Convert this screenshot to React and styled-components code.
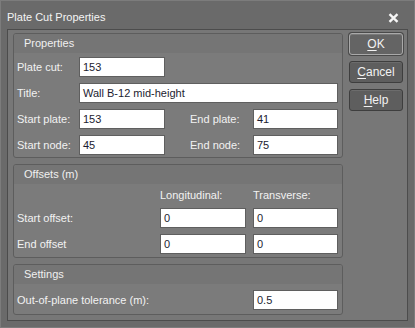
import React from "react";
import styled, { createGlobalStyle } from "styled-components";

const GlobalStyle = createGlobalStyle`
  html, body {
    margin: 0;
    padding: 0;
    background: #6a6a6a;
  }
  body {
    font-family: "Liberation Sans", Arial, sans-serif;
    font-size: 11px;
    color: #f2f2f2;
  }
`;

// Outer dialog frame
const Window = styled.div`
  box-sizing: border-box;
  width: 415px;
  height: 328px;
  background: #6a6a6a;
  border: 1px solid #7c7c7c;
  padding: 0 6px 6px 6px;
  display: flex;
  flex-direction: column;
`;

const TitleBar = styled.div`
  height: 28px;
  flex: none;
  display: flex;
  align-items: flex-start;
  justify-content: space-between;
  padding: 10px 9px 0 0;
  box-sizing: border-box;
  line-height: 13px;
  color: #f4f4f4;
`;

const CloseButton = styled.div`
  width: 11px;
  height: 10px;
  margin-top: 2px;
  display: flex;
`;

const Client = styled.div`
  flex: 1;
  border: 1px solid #4c4c4c;
  background: #777777;
  display: flex;
  gap: 6px;
  padding: 3px 0 0 5px;
`;

const Groups = styled.div`
  width: 330px;
  display: flex;
  flex-direction: column;
  gap: 6px;
`;

const Group = styled.div`
  box-sizing: border-box;
  height: ${(p) => p.h}px;
  border: 1px solid #5d5d5d;
  border-radius: 3px;
  background: #7b7b7b;
  overflow: hidden;
`;

const GroupHeader = styled.div`
  height: 19px;
  line-height: 19px;
  padding-left: 10px;
  background: #757575;
  color: #f0f0f0;
`;

const FieldGrid = styled.div`
  display: grid;
  grid-template-columns: ${(p) => p.cols};
  row-gap: ${(p) => p.rowGap ?? 6}px;
  align-items: center;
  padding: ${(p) => p.pad} 4px 0 3px;
`;

const Label = styled.div`
  line-height: 20px;
  white-space: nowrap;
  grid-column: ${(p) => p.col || "auto"};
`;

const ColHead = styled.div`
  line-height: 14px;
  grid-column: ${(p) => p.col || "auto"};
`;

const Input = styled.div`
  box-sizing: border-box;
  height: 20px;
  background: #ffffff;
  border: 1px solid #5f5f5f;
  color: #1c1c30;
  padding-left: 3px;
  line-height: 18px;
  grid-column: ${(p) => p.span || "auto"};
`;

const Buttons = styled.div`
  width: 54px;
  display: flex;
  flex-direction: column;
  gap: 6px;
`;

const Button = styled.div`
  box-sizing: border-box;
  height: 22px;
  border-radius: 3px;
  border: 1px solid ${(p) => (p.primary ? "#a9a9a9" : "#3e3e3e")};
  background: ${(p) => (p.primary ? "#646464" : "#5e5e5e")};
  box-shadow: inset 0 1px 0 ${(p) => (p.primary ? "#7a7a7a" : "#6c6c6c")},
    0 0 0 ${(p) => (p.primary ? "1px #4a4a4a" : "0 transparent")};
  color: #f2f2f2;
  text-align: center;
  line-height: 20px;
  font-size: 12px;

  u {
    text-decoration: underline;
    text-underline-offset: 2px;
  }
`;

export default function App() {
  return (
    <>
      <GlobalStyle />
      <Window>
        <TitleBar>
          <span>Plate Cut Properties</span>
          <CloseButton>
            <svg width="11" height="10" viewBox="0 0 11 10">
              <path
                d="M1.5 1.2 L9.5 8.8 M9.5 1.2 L1.5 8.8"
                stroke="#f6f6f6"
                strokeWidth="2.4"
              />
            </svg>
          </CloseButton>
        </TitleBar>
        <Client>
          <Groups>
            <Group h={125}>
              <GroupHeader>Properties</GroupHeader>
              <FieldGrid cols="62px 86px 25px 63px 85px" pad="4px">
                <Label>Plate cut:</Label>
                <Input>153</Input>
                <div />
                <div />
                <div />
                <Label>Title:</Label>
                <Input span="2 / 6">Wall B-12 mid-height</Input>
                <Label>Start plate:</Label>
                <Input>153</Input>
                <div />
                <Label>End plate:</Label>
                <Input>41</Input>
                <Label>Start node:</Label>
                <Input>45</Input>
                <div />
                <Label>End node:</Label>
                <Input>75</Input>
              </FieldGrid>
            </Group>
            <Group h={94}>
              <GroupHeader>Offsets (m)</GroupHeader>
              <FieldGrid cols="143px 86px 7px 85px" pad="4px">
                <ColHead col="2">Longitudinal:</ColHead>
                <ColHead col="4">Transverse:</ColHead>
                <Label>Start offset:</Label>
                <Input>0</Input>
                <div />
                <Input>0</Input>
                <Label>End offset</Label>
                <Input>0</Input>
                <div />
                <Input>0</Input>
              </FieldGrid>
            </Group>
            <Group h={51}>
              <GroupHeader>Settings</GroupHeader>
              <FieldGrid cols="236px 85px" pad="6px">
                <Label>Out-of-plane tolerance (m):</Label>
                <Input>0.5</Input>
              </FieldGrid>
            </Group>
          </Groups>
          <Buttons>
            <Button primary>
              <u>O</u>K
            </Button>
            <Button>
              <u>C</u>ancel
            </Button>
            <Button>
              <u>H</u>elp
            </Button>
          </Buttons>
        </Client>
      </Window>
    </>
  );
}
